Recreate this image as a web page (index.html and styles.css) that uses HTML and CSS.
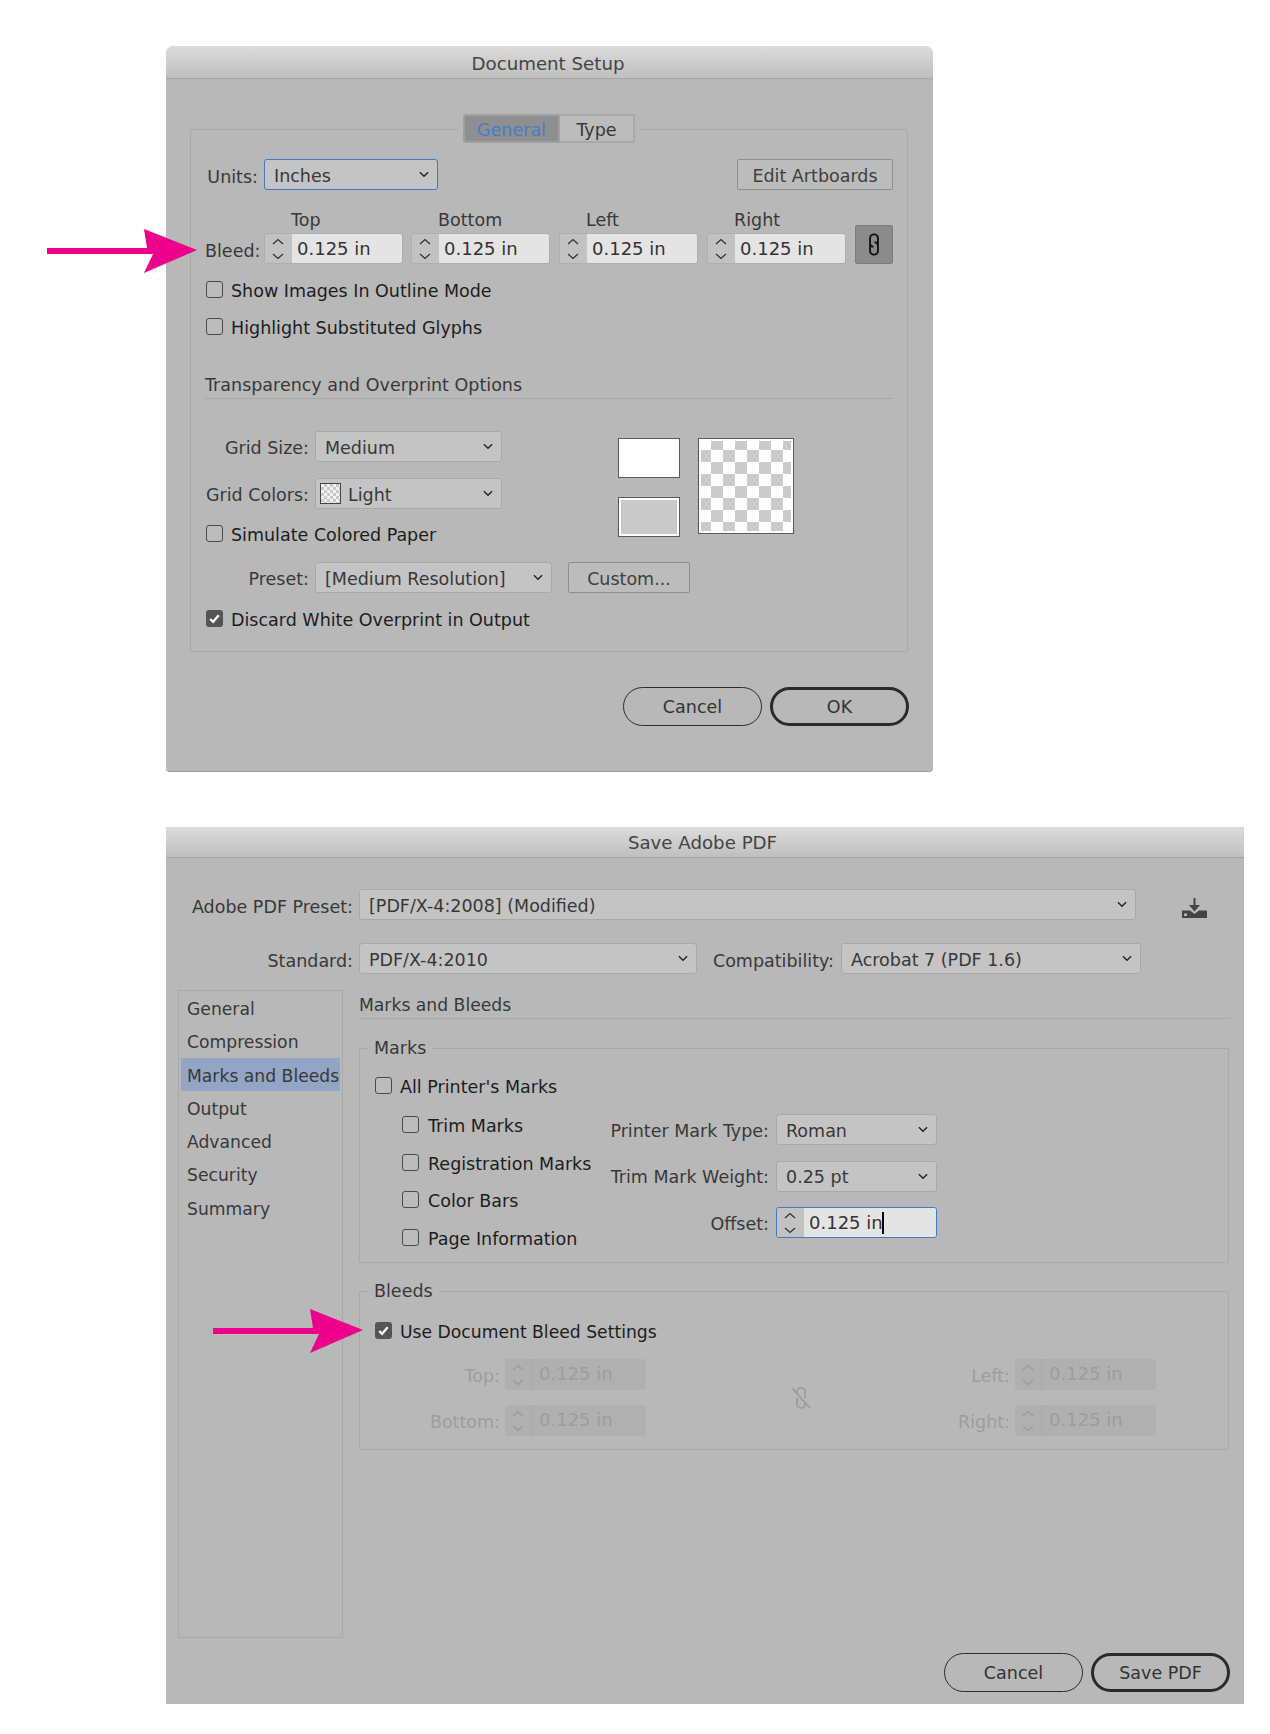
FILE: index.html
```html
<!DOCTYPE html>
<html lang="en">
<head>
  <meta charset="UTF-8" />
  <title>Document Setup and Save Adobe PDF</title>
  <link rel="stylesheet" href="styles.css">
</head>
<body>
  <svg class="defs" width="0" height="0">
    <symbol id="chev" viewBox="0 0 11 7">
      <path d="M1 1l4.5 4.5L10 1" fill="none" stroke="currentColor" stroke-width="1.5"/>
    </symbol>
    <symbol id="updown" viewBox="0 0 14 24">
      <path d="M2 7l5-4.5L12 7M2 17l5 4.5L12 17" fill="none" stroke="currentColor" stroke-width="1.2"/>
    </symbol>
    <symbol id="tick" viewBox="0 0 18 18">
      <path d="M4.5 9.5l3 3 6-7" fill="none" stroke="currentColor" stroke-width="2.4"/>
    </symbol>
    <symbol id="pink-arrow" viewBox="0 0 150 44">
      <path d="M0 19H100L97 0L150 21L97 44L106 25H0Z" fill="currentColor"/>
    </symbol>
  </svg>

  <svg class="arrow arrow-bleed"><use href="#pink-arrow"/></svg>
  <svg class="arrow arrow-use"><use href="#pink-arrow"/></svg>

  <div class="dialog dialog-setup">
    <div class="titlebar">Document Setup</div>
    <div class="panel">
      <div class="tabs">
        <span class="tab tab-on">General</span>
        <span class="tab">Type</span>
      </div>

      <div class="row row-units">
        <span class="lbl lbl-short">Units:</span>
        <div class="select select-focus select-units"><span class="select-text">Inches</span><svg class="chev"><use href="#chev"/></svg></div>
        <button class="btn-square btn-artboards">Edit Artboards</button>
      </div>

      <div class="bleed-row">
        <span class="lbl lbl-short lbl-bleed">Bleed:</span>
        <div class="bleed-col">
          <span class="lbl">Top</span>
          <div class="spin"><span class="spin-arrows"><svg class="updown"><use href="#updown"/></svg></span><span class="spin-value">0.125 in</span></div>
        </div>
        <div class="bleed-col">
          <span class="lbl">Bottom</span>
          <div class="spin"><span class="spin-arrows"><svg class="updown"><use href="#updown"/></svg></span><span class="spin-value">0.125 in</span></div>
        </div>
        <div class="bleed-col">
          <span class="lbl">Left</span>
          <div class="spin"><span class="spin-arrows"><svg class="updown"><use href="#updown"/></svg></span><span class="spin-value">0.125 in</span></div>
        </div>
        <div class="bleed-col">
          <span class="lbl">Right</span>
          <div class="spin"><span class="spin-arrows"><svg class="updown"><use href="#updown"/></svg></span><span class="spin-value">0.125 in</span></div>
        </div>
        <div class="link-btn">
          <svg width="16" height="27" viewBox="0 0 14 24">
            <path d="M10.5 14V6.5a3.5 3.5 0 0 0-7 0V11a3 3 0 0 0 3 3M3.5 10v7.5a3.5 3.5 0 0 0 7 0V13a3 3 0 0 0-3-3" fill="none" stroke="#111" stroke-width="1.7"/>
          </svg>
        </div>
      </div>

      <label class="check check-show"><span class="box"></span>Show Images In Outline Mode</label>
      <label class="check check-glyphs"><span class="box"></span>Highlight Substituted Glyphs</label>

      <div class="section-head section-transparency">Transparency and Overprint Options</div>

      <div class="grid-block">
        <div class="grid-rows">
          <div class="row">
            <span class="lbl lbl-grid">Grid Size:</span>
            <div class="select select-grid"><span class="select-text">Medium</span><svg class="chev"><use href="#chev"/></svg></div>
          </div>
          <div class="row row-colors">
            <span class="lbl lbl-grid">Grid Colors:</span>
            <div class="select select-grid"><span class="mini-check"></span><span class="select-text">Light</span><svg class="chev"><use href="#chev"/></svg></div>
          </div>
          <label class="check check-paper"><span class="box"></span>Simulate Colored Paper</label>
        </div>
        <div class="swatches">
          <span class="swatch swatch-white"></span>
          <span class="swatch swatch-gray"></span>
        </div>
        <div class="checker"></div>
      </div>

      <div class="row row-preset">
        <span class="lbl lbl-grid">Preset:</span>
        <div class="select select-preset"><span class="select-text">[Medium Resolution]</span><svg class="chev"><use href="#chev"/></svg></div>
        <button class="btn-square btn-custom">Custom...</button>
      </div>

      <label class="check check-discard"><span class="box box-on"><svg width="18" height="18"><use href="#tick"/></svg></span>Discard White Overprint in Output</label>
    </div>

    <div class="actions actions-setup">
      <button class="pill">Cancel</button>
      <button class="pill pill-main">OK</button>
    </div>
  </div>

  <div class="dialog dialog-pdf">
    <div class="titlebar titlebar-pdf">Save Adobe PDF</div>

    <div class="row row-pdf-preset">
      <span class="lbl lbl-pdf">Adobe PDF Preset:</span>
      <div class="select select-pdf-preset"><span class="select-text">[PDF/X-4:2008] (Modified)</span><svg class="chev"><use href="#chev"/></svg></div>
      <svg class="save-icon" width="25" height="20" viewBox="0 0 25 20">
        <path d="M0 20V12.5H8L12.5 16L17 12.5H25V20ZM2 15.5V18H5V15.5Z" fill="#444" fill-rule="evenodd"/>
        <path d="M11.5 0H13.5V7H18L12.5 13.5L7 7H11.5Z" fill="#444"/>
      </svg>
    </div>

    <div class="row row-standard">
      <span class="lbl lbl-pdf">Standard:</span>
      <div class="select select-standard"><span class="select-text">PDF/X-4:2010</span><svg class="chev"><use href="#chev"/></svg></div>
      <span class="lbl lbl-compat">Compatibility:</span>
      <div class="select select-compat"><span class="select-text">Acrobat 7 (PDF 1.6)</span><svg class="chev"><use href="#chev"/></svg></div>
    </div>

    <div class="pdf-main">
      <ul class="side-list">
        <li>General</li>
        <li>Compression</li>
        <li class="side-on">Marks and Bleeds</li>
        <li>Output</li>
        <li>Advanced</li>
        <li>Security</li>
        <li>Summary</li>
      </ul>

      <div class="pdf-content">
        <div class="section-head section-marks">Marks and Bleeds</div>

        <fieldset class="group group-marks">
          <legend>Marks</legend>
          <label class="check"><span class="box"></span>All Printer's Marks</label>
          <div class="marks-body">
            <div class="marks-checks">
              <label class="check"><span class="box"></span>Trim Marks</label>
              <label class="check"><span class="box"></span>Registration Marks</label>
              <label class="check"><span class="box"></span>Color Bars</label>
              <label class="check"><span class="box"></span>Page Information</label>
            </div>
            <div class="marks-fields">
              <div class="row">
                <span class="lbl lbl-mark">Printer Mark Type:</span>
                <div class="select select-mark"><span class="select-text">Roman</span><svg class="chev"><use href="#chev"/></svg></div>
              </div>
              <div class="row">
                <span class="lbl lbl-mark">Trim Mark Weight:</span>
                <div class="select select-mark"><span class="select-text">0.25 pt</span><svg class="chev"><use href="#chev"/></svg></div>
              </div>
              <div class="row">
                <span class="lbl lbl-mark">Offset:</span>
                <div class="spin spin-focus select-mark"><span class="spin-arrows"><svg class="updown"><use href="#updown"/></svg></span><span class="spin-value">0.125 in<span class="caret"></span></span></div>
              </div>
            </div>
          </div>
        </fieldset>

        <fieldset class="group group-bleeds">
          <legend>Bleeds</legend>
          <label class="check check-use"><span class="box box-on"><svg width="18" height="18"><use href="#tick"/></svg></span>Use Document Bleed Settings</label>
          <div class="bleed-fields">
            <div class="off-col off-col-left">
              <div class="row">
                <span class="lbl lbl-off lbl-off-left">Top:</span>
                <div class="spin spin-off"><span class="spin-arrows"><svg class="updown"><use href="#updown"/></svg></span><span class="spin-value">0.125 in</span></div>
              </div>
              <div class="row">
                <span class="lbl lbl-off lbl-off-left">Bottom:</span>
                <div class="spin spin-off"><span class="spin-arrows"><svg class="updown"><use href="#updown"/></svg></span><span class="spin-value">0.125 in</span></div>
              </div>
            </div>
            <svg class="unlink" width="22" height="26" viewBox="0 0 22 26">
              <path d="M7 9V7a4 4 0 0 1 8 0v6M7 13v6a4 4 0 0 0 8 0v-2M2 3l18 20" fill="none" stroke="#9a9a9a" stroke-width="1.6"/>
            </svg>
            <div class="off-col">
              <div class="row">
                <span class="lbl lbl-off lbl-off-right">Left:</span>
                <div class="spin spin-off"><span class="spin-arrows"><svg class="updown"><use href="#updown"/></svg></span><span class="spin-value">0.125 in</span></div>
              </div>
              <div class="row">
                <span class="lbl lbl-off lbl-off-right">Right:</span>
                <div class="spin spin-off"><span class="spin-arrows"><svg class="updown"><use href="#updown"/></svg></span><span class="spin-value">0.125 in</span></div>
              </div>
            </div>
          </div>
        </fieldset>
      </div>
    </div>

    <div class="actions actions-pdf">
      <button class="pill">Cancel</button>
      <button class="pill pill-main">Save PDF</button>
    </div>
  </div>
</body>
</html>
```

FILE: styles.css
```css
* {
  box-sizing: border-box;
}

body {
  position: relative;
  margin: 0;
  padding: 46px 0 30px 166px;
  background: #fff;
  color: #383838;
  font-family: "DejaVu Sans", sans-serif;
  font-size: 17.5px;
  line-height: 22px;
}

.defs {
  position: absolute;
}

.arrow {
  position: absolute;
  color: #ec008c;
  width: 150px;
  height: 44px;
}

.arrow-bleed {
  left: 47px;
  top: 229px;
}

.arrow-use {
  left: 213px;
  top: 1309px;
}

/* dialogs */
.dialog {
  background: #b8b8b8;
  overflow: hidden;
}

.dialog-setup {
  width: 767px;
  height: 726px;
  border-radius: 8px 8px 4px 4px;
  border-bottom: 1px solid #999;
}

.dialog-pdf {
  width: 1078px;
  height: 877px;
  margin-top: 55px;
}

.titlebar {
  height: 33px;
  padding-right: 3px;
  line-height: 36px;
  text-align: center;
  font-size: 18.2px;
  color: #444;
  background: linear-gradient(#dcdcdc, #bfbfbf);
  border-bottom: 1px solid #a4a4a4;
}

.titlebar-pdf {
  height: 31px;
  padding-right: 5px;
  line-height: 32px;
}

.row {
  display: flex;
  align-items: center;
}

.lbl {
  padding-top: 4px;
  white-space: nowrap;
}

.panel {
  width: 718px;
  height: 523px;
  margin: 50px 0 0 24px;
  padding: 0 14px;
  border: 1px solid #a9a9a9;
  border-radius: 2px;
}

.tabs {
  display: flex;
  width: 182px;
  margin: -16px auto 0;
  padding: 0 5px;
  background: #b8b8b8;
  height: 29px;
}

.tab {
  width: 75px;
  flex: none;
  line-height: 28px;
  text-align: center;
  border: 2px solid #a9a9a9;
  border-left: 0;
  background: #bcbcbc;
  border-radius: 0 2px 2px 0;
}

.tab-on {
  width: 97px;
  color: #3f7fca;
  background: #8f8f8f;
  border: 2px solid #a0a0a0;
  border-radius: 2px 0 0 2px;
}

.row-units {
  margin-top: 16px;
}

.lbl-short {
  width: 53px;
  margin-right: 6px;
  text-align: right;
}

/* select boxes */
.select {
  display: flex;
  align-items: center;
  height: 31px;
  padding-left: 9px;
  background: #c4c4c4;
  border: 1px solid #a9a9a9;
  border-radius: 3px;
  white-space: nowrap;
}

.select-text {
  padding-top: 2px;
}

.chev {
  margin-left: auto;
  margin-right: 8px;
  width: 10px;
  height: 7px;
  flex: none;
  color: #222;
}

.select-focus {
  border: 1.5px solid #4a78b8;
}

.select-units {
  width: 174px;
}

.btn-square {
  height: 31px;
  font: inherit;
  color: #3f3f3f;
  background: #bcbcbc;
  border: 1.5px solid #8f8f8f;
  border-radius: 2px;
  padding: 2px 0 0;
}

.btn-artboards {
  width: 156px;
  margin-left: auto;
}

/* bleed row with the four spinners */
.bleed-row {
  display: flex;
  align-items: flex-end;
  margin-top: 19px;
}

.lbl-bleed {
  padding-top: 0;
  margin-bottom: 2px;
}

.bleed-col {
  width: 139px;
  margin-right: 9px;
}

.lbl-bleed + .bleed-col {
  margin-right: 8px;
}

.bleed-col .lbl {
  display: block;
  padding-top: 0;
  margin: 0 0 2px 27px;
}

.spin {
  display: flex;
  height: 31px;
  border: 1px solid #aeaeae;
  border-radius: 3px;
  overflow: hidden;
}

.spin-arrows {
  display: flex;
  align-items: center;
  justify-content: center;
  width: 27px;
  flex: none;
  background: #c2c2c2;
}

.updown {
  width: 14px;
  height: 24px;
  margin-right: 1px;
  color: #2f2f2f;
}

.spin-value {
  flex: 1;
  padding-left: 5px;
  font-size: 18px;
  line-height: 30px;
  background: #e4e4e4;
  color: #333;
  white-space: nowrap;
}

.spin-focus {
  border: 1.5px solid #4a78b8;
}

.caret {
  display: inline-block;
  width: 2px;
  height: 22px;
  margin-left: -1px;
  vertical-align: -5px;
  background: #000;
}

.spin-off {
  width: 141px;
  border: 0;
}

.spin-off .spin-arrows {
  background: #b0b0b0;
  border-right: 1px solid #a8a8a8;
}

.spin-off .updown {
  color: #999;
}

.spin-off .spin-value {
  padding-left: 7px;
  background: #b0b0b0;
  color: #9d9d9d;
  line-height: 30px;
}

.link-btn {
  display: flex;
  align-items: center;
  justify-content: center;
  width: 38px;
  height: 39px;
  background: #8b8b8b;
  border: 1px solid #7c7c7c;
  border-radius: 2px;
}

/* check boxes */
.check {
  display: flex;
  align-items: center;
  color: #1d1d1d;
  white-space: nowrap;
}

.box {
  width: 17px;
  height: 17px;
  flex: none;
  margin: 0 8px 3px 0;
  border: 1.5px solid #4a4a4a;
  border-radius: 3px;
  background: #bcbcbc;
}

.box-on {
  color: #fff;
  background: #555;
  border: 0;
}

.box-on svg {
  display: block;
  width: 17px;
  height: 17px;
}

.check-show,
.check-glyphs,
.check-paper,
.check-discard {
  padding-left: 1px;
}

.check-show {
  margin-top: 16px;
}

.check-glyphs {
  margin-top: 15px;
}

.check-use {
  font-size: 17.2px;
}

.section-head {
  padding: 1px 0 0;
  border-bottom: 1px solid #a9a9a9;
  height: 26px;
}

.section-transparency {
  margin-top: 34px;
}

.section-marks {
  font-size: 17.2px;
}

/* grid colors block */
.grid-block {
  display: flex;
  margin-top: 32px;
}

.grid-rows {
  width: 413px;
}

.lbl-grid {
  width: 104px;
  margin-right: 6px;
  padding-top: 2px;
  text-align: right;
}

.select-grid {
  width: 187px;
}

.row-colors {
  margin-top: 16px;
}

.mini-check {
  width: 21px;
  height: 21px;
  margin: 0 7px 0 -5px;
  border: 1.5px solid #444;
  background: repeating-conic-gradient(#c8c8c8 0 25%, #f2f2f2 0 50%) 0 0 / 6px 6px;
}

.check-paper {
  margin-top: 15px;
}

.swatches {
  display: flex;
  flex-direction: column;
  gap: 19px;
  margin-top: 7px;
}

.swatch {
  display: block;
  width: 62px;
  height: 40px;
  border: 1.5px solid #5a5a5a;
}

.swatch-white {
  background: #fff;
}

.swatch-gray {
  background: #c9c9c9;
  box-shadow: inset 0 0 0 2px #fff;
}

.checker {
  width: 96px;
  height: 96px;
  margin: 7px 0 0 18px;
  border: 1.5px solid #5a5a5a;
  background: repeating-conic-gradient(#fff 0 25%, #cbcbcb 0 50%) 12px -1px / 24px 24px;
  box-shadow: inset 0 0 0 2px #fff;
}

.row-preset {
  margin-top: 16px;
}

.select-preset {
  width: 237px;
}

.btn-custom {
  width: 122px;
  margin-left: 16px;
}

.check-discard {
  margin-top: 16px;
}

/* pill buttons */
.actions {
  display: flex;
  justify-content: flex-end;
  gap: 8px;
}

.actions-setup {
  margin-top: 35px;
  padding-right: 24px;
}

.actions-pdf {
  margin-top: 15px;
  padding-right: 14px;
}

.pill {
  width: 139px;
  height: 39px;
  font: inherit;
  color: #333;
  background: transparent;
  border: 1.5px solid #2c2c2c;
  border-radius: 20px;
  padding: 0;
}

.pill-main {
  border: 3px solid #2a2a2a;
}

/* save pdf top rows */
.row-pdf-preset {
  margin-top: 31px;
}

.lbl-pdf {
  width: 187px;
  margin-right: 6px;
  text-align: right;
}

.select-pdf-preset {
  width: 777px;
}

.save-icon {
  margin: 6px 0 0 46px;
}

.row-standard {
  margin-top: 23px;
}

.select-standard {
  width: 338px;
}

.lbl-compat {
  width: 137px;
  margin-right: 7px;
  text-align: right;
}

.select-compat {
  width: 300px;
}

.pdf-main {
  display: flex;
  margin-top: 16px;
  padding-left: 12px;
}

.side-list {
  width: 165px;
  height: 648px;
  margin: 0;
  padding: 0 2px;
  list-style: none;
  border: 1px solid #a9a9a9;
  font-size: 17.2px;
}

.side-list li {
  height: 33.3px;
  line-height: 36px;
  padding-left: 6px;
  white-space: nowrap;
}

.side-on {
  background: #94a4c4;
}

.pdf-content {
  width: 871px;
  margin-left: 16px;
  padding-top: 3px;
}

.group {
  width: 870px;
  margin: 18px 0 0;
  padding: 17px 15px 0 15px;
  border: 1px solid #a9a9a9;
  border-radius: 2px;
  min-inline-size: 0;
}

.group legend {
  margin-left: -7px;
  padding: 0 6px;
}

.group-marks {
  height: 226px;
}

.group-bleeds {
  height: 170px;
  margin-top: 17px;
  padding-top: 19px;
}

.marks-body {
  display: flex;
  margin: 17px 0 0 27px;
}

.marks-checks {
  display: flex;
  flex-direction: column;
  gap: 15.7px;
  width: 198px;
}

.marks-checks .box {
  margin-right: 9px;
}

.marks-fields {
  display: flex;
  flex-direction: column;
  gap: 15.5px;
  margin-top: -1px;
}

.lbl-mark {
  width: 169px;
  margin-right: 7px;
  padding-top: 2px;
  text-align: right;
}

.select-mark {
  width: 161px;
}

.bleed-fields {
  display: flex;
  margin-top: 16px;
}

.off-col {
  display: flex;
  flex-direction: column;
  gap: 15px;
}

.off-col-left {
  width: 271px;
}

.lbl-off {
  margin-right: 5px;
  padding-top: 2px;
  text-align: right;
  color: #9d9d9d;
}

.lbl-off-left {
  width: 125px;
}

.lbl-off-right {
  width: 109px;
}

.unlink {
  align-self: center;
  margin: 0 89px 0 144px;
}
```
